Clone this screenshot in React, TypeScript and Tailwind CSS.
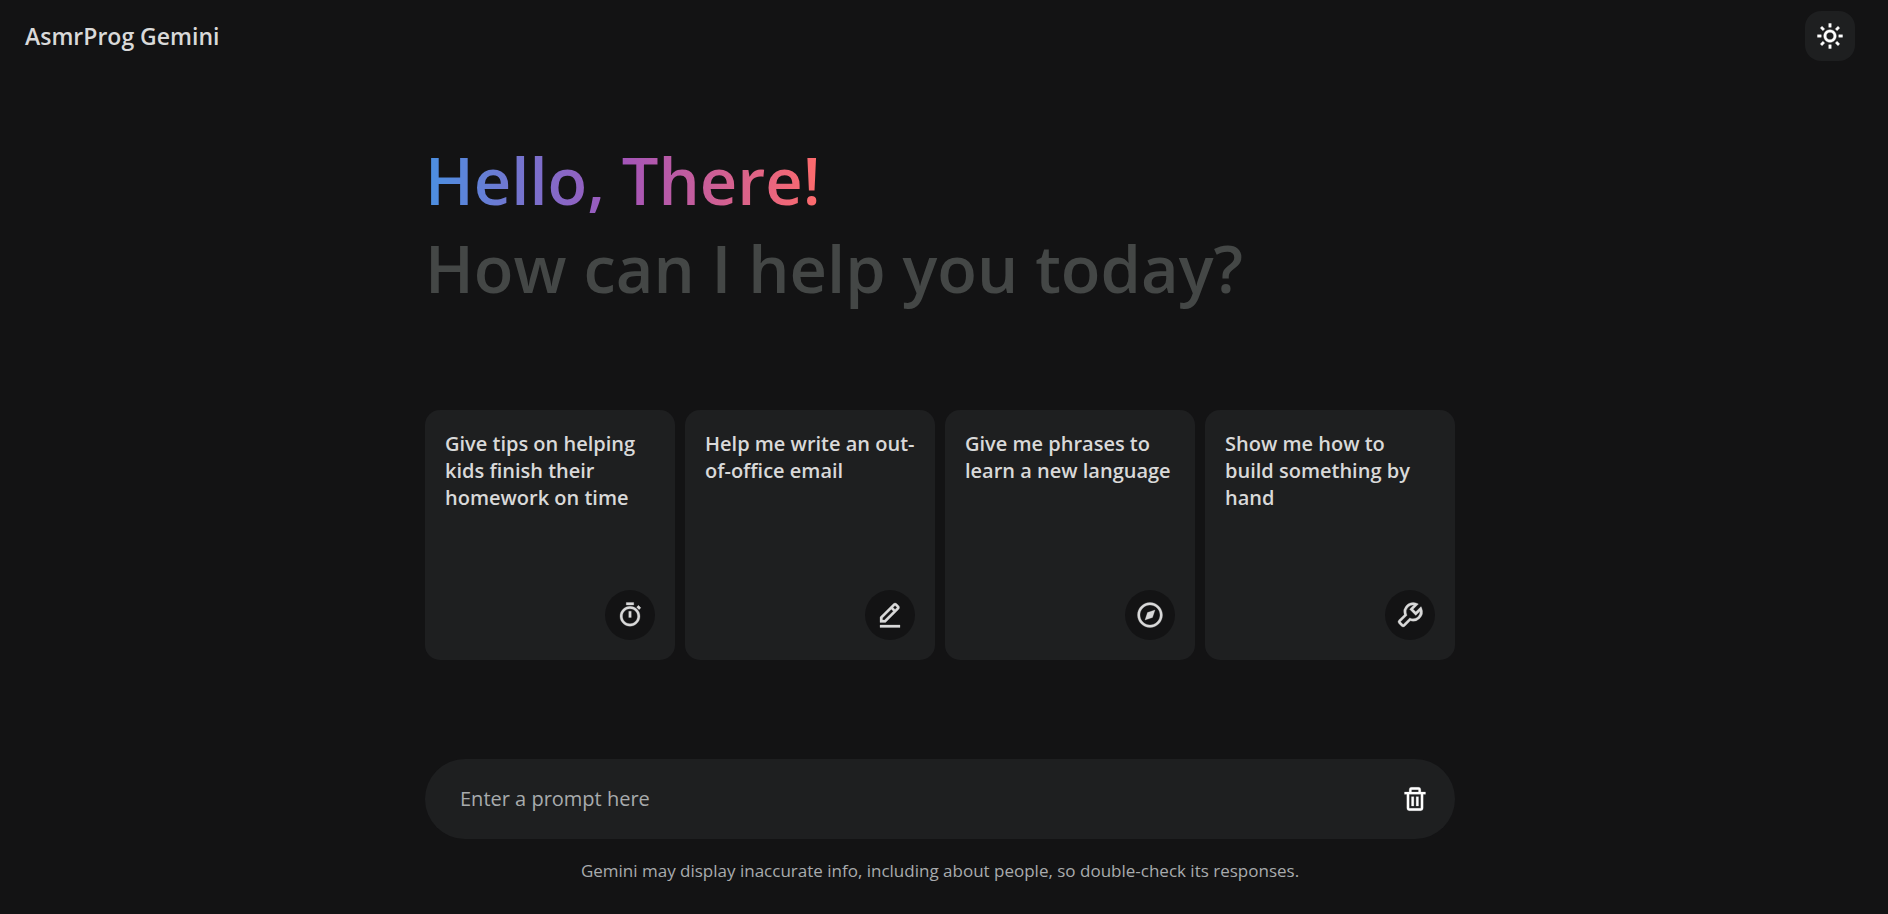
import { BiSun, BiStopwatch, BiEditAlt, BiCompass, BiWrench, BiTrash } from "react-icons/bi";

const suggestions = [
  { text: "Give tips on helping kids finish their homework on time", Icon: BiStopwatch },
  { text: "Help me write an out-of-office email", Icon: BiEditAlt },
  { text: "Give me phrases to learn a new language", Icon: BiCompass },
  { text: "Show me how to build something by hand", Icon: BiWrench },
];

export default function App() {
  return (
    <div className="flex min-h-screen flex-col bg-[#131314] pr-2 font-['Open_Sans',sans-serif] text-[#d9d9d9]">
      <header className="flex items-center justify-between px-[25px] pt-[11px]">
        <p className="text-[23px] leading-8 font-semibold">AsmrProg Gemini</p>
        <button
          type="button"
          aria-label="Switch theme"
          className="flex size-[50px] items-center justify-center rounded-2xl bg-[#1e1f20] text-white"
        >
          <BiSun className="size-[30px]" strokeWidth={0.3} />
        </button>
      </header>

      <main className="mx-auto flex w-full max-w-[1030px] flex-1 flex-col">
        <h1 className="mt-[75px] text-[65px] leading-[88px] font-semibold">
          <span className="block w-fit bg-linear-to-r/srgb from-[#4a90e2] via-[#a355b9] to-[#ff6b6b] bg-clip-text text-transparent">
            Hello, There!
          </span>
          <span className="block text-[#444746]">How can I help you today?</span>
        </h1>

        <ul className="mt-[98px] grid grid-cols-2 gap-2.5 md:grid-cols-4">
          {suggestions.map(({ text, Icon }) => (
            <li key={text}>
              <button
                type="button"
                className="flex min-h-[250px] w-full flex-col justify-between rounded-[15px] bg-[#1e1f20] p-5 text-left"
              >
                <span className="text-xl leading-[27px] font-semibold">{text}</span>
                <span className="flex size-[50px] items-center justify-center self-end rounded-full bg-[#131314]">
                  <Icon className="size-[30px]" strokeWidth={0.2} />
                </span>
              </button>
            </li>
          ))}
        </ul>

        <form className="mt-[99px] flex h-20 items-center rounded-full bg-[#1e1f20] pr-[15px] pl-[35px]">
          <input
            type="text"
            aria-label="Prompt"
            placeholder="Enter a prompt here"
            className="min-w-0 flex-1 bg-transparent text-xl outline-none placeholder:text-[#a8abad]"
          />
          <button type="button" aria-label="Delete chats" className="flex size-[50px] items-center justify-center text-white">
            <BiTrash className="size-[28px]" strokeWidth={0.2} />
          </button>
        </form>

        <p className="mt-5 text-center text-[17px] leading-[23px] text-[#a8abad]">
          Gemini may display inaccurate info, including about people, so double-check its responses.
        </p>
      </main>
    </div>
  );
}
